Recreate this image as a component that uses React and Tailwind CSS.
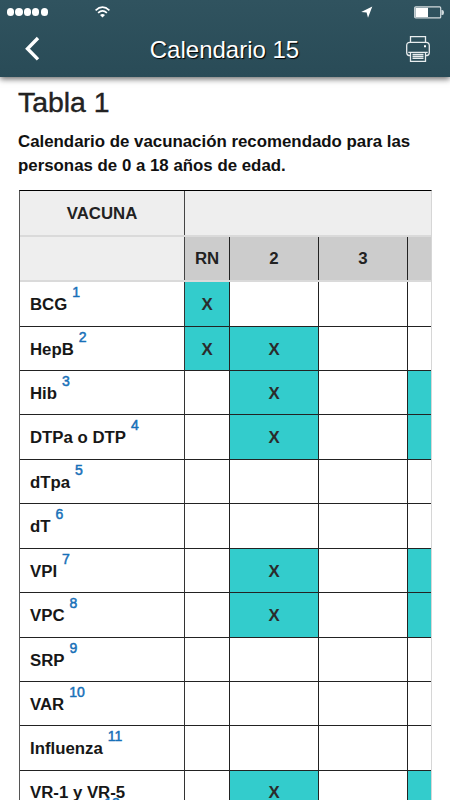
const ROWS = [
  { name: 'BCG', note: '1', height: 'h-[45px]', doses: ['RN'] },
  { name: 'HepB', note: '2', height: 'h-[44px]', doses: ['RN', '2'] },
  { name: 'Hib', note: '3', height: 'h-[44px]', doses: ['2', '4'] },
  { name: 'DTPa o DTP', note: '4', height: 'h-[45px]', doses: ['2', '4'] },
  { name: 'dTpa', note: '5', height: 'h-[44px]', doses: [] },
  { name: 'dT', note: '6', height: 'h-[45px]', doses: [] },
  { name: 'VPI', note: '7', height: 'h-[44px]', doses: ['2', '4'] },
  { name: 'VPC', note: '8', height: 'h-[45px]', doses: ['2', '4'] },
  { name: 'SRP', note: '9', height: 'h-[44px]', doses: [] },
  { name: 'VAR', note: '10', height: 'h-[44px]', doses: [] },
  { name: 'Influenza', note: '11', height: 'h-[45px]', doses: [] },
  { name: 'VR-1 y VR-5', note: '12', height: 'h-[60px]', doses: ['2', '4'], wrapped: true },
];

const COLS = 'grid shrink-0 grid-cols-[165px_45px_89px_89px_23px]';

function Header() {
  return (
    <header className="relative z-10 flex h-[77px] shrink-0 flex-col bg-gradient-to-b from-[#30535f] to-[#294b57] shadow-[0_2px_6px_rgba(0,0,0,0.6)]">
      <div className="flex h-6 items-center">
        <div className="ml-[7px] flex w-[88px] gap-[1.2px]">
          {[0, 1, 2, 3, 4].map((i) => (
            <span key={i} className="size-[7.2px] rounded-full bg-white" />
          ))}
        </div>
        <svg className="h-3 w-[15px]" viewBox="0 0 15 12" fill="none" stroke="white" strokeWidth="1.7">
          <path d="M.6 4.3Q7.5-2 14.4 4.3M3.1 6.9Q7.5 3 11.9 6.9" />
          <path d="M7.5 11.6 5 9Q7.5 7 10 9Z" fill="white" stroke="none" />
        </svg>
        <svg className="ml-[251px] h-3 w-[12px]" viewBox="0 0 12 12" fill="white">
          <path d="M11.3.5 7 11.7 5.6 6.5.2 5.9Z" />
        </svg>
        <svg className="ml-[41px] h-[13px] w-[31px]" viewBox="0 0 31 13">
          <rect x=".7" y=".9" width="26" height="11" rx="1" fill="none" stroke="#d3dbde" strokeWidth="1.2" />
          <path d="M1.5 1.8h12.5v9.2H1.5Z" fill="white" />
          <path d="M27.5 4h.8q1.7 0 1.7 2.5T28.3 9h-.8Z" fill="#d3dbde" />
        </svg>
      </div>
      <div className="flex h-[50px] items-center justify-between">
        <svg className="ml-[24px] h-[26px] w-[17px]" viewBox="0 0 17 26" fill="none" stroke="white" strokeWidth="3.4">
          <path d="M14 2 3.5 12.7 14 23.4" />
        </svg>
        <h1 className="pt-px pl-[3px] text-2xl leading-[50px] text-white [text-shadow:1px_1px_1px_#000]">Calendario 15</h1>
        <svg className="mr-[19px] h-[28px] w-[26px]" viewBox="0 0 26 28" fill="none" stroke="#e8edef" strokeWidth="1.3">
          <path d="M5.5 7.3V1.7h15v5.6" />
          <path d="M5.3 20.5H3.8Q1.7 20 1.7 17.5V10.5Q1.7 7.3 5 7.3H21Q24.3 7.3 24.3 10.5v7q0 2.5-2.1 3h-1.5" />
          <path d="M3.3 17.4H22.7M5.5 17.4v8.9h15v-8.9M7.5 19.5h11M7.5 21.5h11M7.5 23.4h11" />
          <path d="M19 10.3h2v2h-2Z" fill="white" stroke="none" />
        </svg>
      </div>
    </header>
  );
}

function VaccineRow({ row }) {
  const pad = row.wrapped ? 'pt-[12px]' : 'pt-[13px]';
  return (
    <div className={`${COLS} ${row.height}`}>
      <div className="flex border-r border-b border-r-[#333] border-b-[#222] pl-[10px]">
        <span className={`text-[16.8px] leading-5 whitespace-nowrap ${pad}`}>
          {row.name}
          <sup
            className={
              row.wrapped
                ? 'relative top-[10px] -left-[21px] text-sm leading-none font-normal text-[#1770b8] [-webkit-text-stroke:0.5px]'
                : 'relative -top-[13px] ml-[5px] align-baseline text-sm leading-none font-normal text-[#1770b8] [-webkit-text-stroke:0.5px]'
            }
          >
            {row.note}
          </sup>
        </span>
      </div>
      {['RN', '2', '3'].map((month) => (
        <div
          key={month}
          className={`flex justify-center border-r border-b border-r-[#222] border-b-[#222] text-[16.8px] leading-5 text-[#2b2b2b] ${pad} ${
            row.doses.includes(month) ? 'bg-[#33cccc]' : 'bg-white'
          }`}
        >
          {row.doses.includes(month) && 'X'}
        </div>
      ))}
      <div className={`border-b border-[#222] ${row.doses.includes('4') ? 'bg-[#33cccc]' : 'bg-white'}`} />
    </div>
  );
}

export default function App() {
  return (
    <div className="flex h-[800px] w-[450px] flex-col overflow-hidden bg-white font-['Liberation_Sans',Arial,sans-serif] text-[#171717]">
      <Header />
      <main className="flex min-h-0 grow flex-col">
        <h2 className="ml-[18px] pt-[7px] text-[28.4px] leading-9 text-[#222] [-webkit-text-stroke:0.4px]">Tabla 1</h2>
        <p className="ml-[18px] pt-[10px] text-[16.85px] leading-6 font-bold whitespace-nowrap text-[#111]">
          Calendario de vacunación recomendado para las
          <br />
          personas de 0 a 18 años de edad.
        </p>
        <div className="mt-[12px] ml-[19px] flex min-h-0 w-[413px] grow flex-col overflow-hidden border-t border-r border-l border-t-black border-r-[#d6d6d6] border-l-[#555] font-bold">
          <div className={`${COLS} h-[46px] border-b-2 border-[#dadada] bg-[#eee] text-[#222]`}>
            <div className="flex justify-center border-r border-[#444] pt-[13px] text-[16.8px] leading-5">VACUNA</div>
          </div>
          <div className={`${COLS} h-[45px] border-b-2 border-[#dadada] bg-[#eee] text-[16.8px] leading-5 text-[#222]`}>
            <div className="border-r border-[#444]" />
            {['RN', '2', '3'].map((month) => (
              <div key={month} className="flex justify-center border-r border-[#222] bg-[#ccc] pt-[12px]">
                {month}
              </div>
            ))}
            <div className="bg-[#ccc]" />
          </div>
          {ROWS.map((row) => (
            <VaccineRow key={row.name} row={row} />
          ))}
        </div>
      </main>
    </div>
  );
}
